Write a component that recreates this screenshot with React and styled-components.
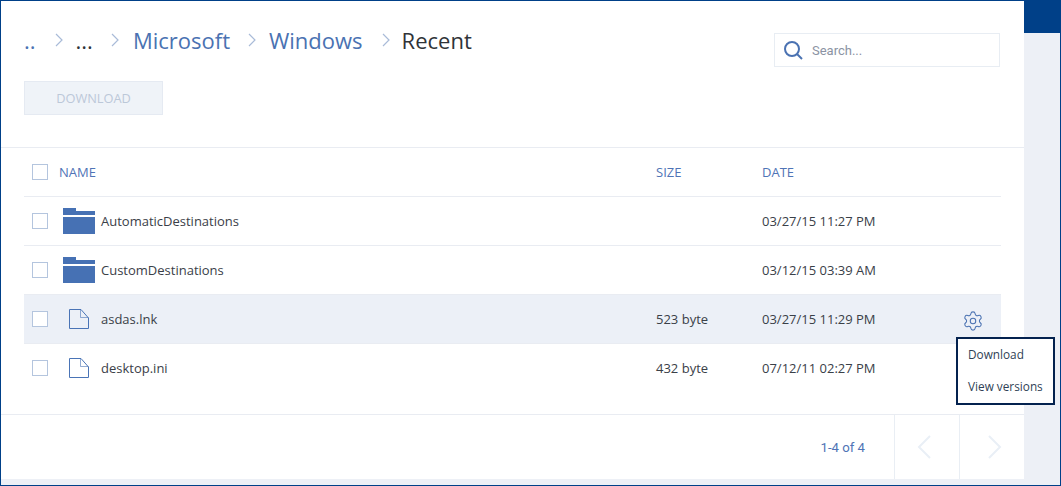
import React from "react";
import styled, { createGlobalStyle } from "styled-components";
import { Settings } from "lucide-react";

const Global = createGlobalStyle`
  html, body { margin: 0; padding: 0; background: #fff; }
  * { box-sizing: border-box; }
`;
const Frame = styled.div`
  width: 1061px; height: 486px; border: 1px solid #004088;
  display: flex; background: #edf0f6; font-family: "Open Sans", sans-serif; position: relative; overflow: hidden;
`;
const Main = styled.main`
  width: 1023px; height: 478px; background: #fff; display: flex; flex-direction: column;
`;
const Side = styled.aside`
  flex: 1; display: flex; flex-direction: column;
`;
const SideTop = styled.div`
  height: 32px; background: #004088;
`;
const Header = styled.header`
  height: 147px; flex: none; padding: 22px 24px 0 23px; border-bottom: 1px solid #e9ecf2; display: flex; justify-content: space-between;
`;
const HeaderLeft = styled.div`
  display: flex; flex-direction: column; gap: 24px; align-items: flex-start;
`;
const Crumbs = styled.nav`
  display: flex; align-items: center; height: 34px; font-size: 22px; line-height: 34px;
`;
const Crumb = styled.span`
  color: ${p => p.$dark ? "#2f3338" : "#4a72b2"};
  margin-left: ${p => p.$ml || 0}px;
`;
const CrumbSep = styled.svg`
  width: 8px; height: 14px; margin-left: ${p => p.$ml}px; fill: none; stroke: #a9bbd8; stroke-width: 1.2; flex: none;
`;
const DownloadBtn = styled.button`
  width: 139px; height: 34px; background: #eff3f8; border: 1px solid #e5eaf2; color: #bcc8d8;
  font: 12.8px "Open Sans", sans-serif; padding: 0; display: flex; align-items: center; justify-content: center;
`;
const SearchBox = styled.div`
  margin-top: 10px; width: 226px; height: 34px; border: 1px solid #e8edf3; display: flex; align-items: center; padding-left: 8px; gap: 9px;
`;
const SearchText = styled.span`
  font: 13px Roboto, sans-serif; color: #8b93a3; padding-top: 1px;
`;
const SearchIcon = styled.svg`
  width: 20px; height: 20px; fill: none; stroke: #4a72b2; stroke-width: 2; flex: none;
`;
const Table = styled.section`
  flex: 1; padding: 0 23px; display: flex; flex-direction: column;
`;
const Row = styled.div`
  display: grid; grid-template-columns: 27px 597px 106px 181px 1fr; align-items: center; height: 49px; padding-left: 8px;
  border-bottom: 1px solid ${p => p.$plain ? "transparent" : "#e9ecf2"};
  background: ${p => p.$active ? "#ecf0f7" : "transparent"};
  font-size: 13px; color: #3a4048;
`;
const HeadRow = styled(Row)`
  font-size: 13px; color: #4f74b6;
`;
const Check = styled.span`
  width: 16px; height: 16px; border: 1px solid #b4c5de; background: #fff; display: block;
`;
const NameCell = styled.div`
  display: flex; align-items: center;
`;
const IconSlot = styled.span`
  width: 42px; flex: none; display: flex; justify-content: center; padding-right: 2px;
`;
const GearCell = styled.div`
  display: flex; justify-content: flex-end; padding: 3px 17px 0 0; color: #4a72b2;
`;
const Footer = styled.footer`
  height: 65px; flex: none; border-top: 1px solid #e9ecf2; display: flex; justify-content: flex-end; align-items: stretch;
`;
const Count = styled.span`
  font: 13.2px Roboto, sans-serif; color: #4f74b6; align-self: center; margin-right: 29px;
`;
const PageBtn = styled.div`
  width: 65px; border-left: 1px solid #e9eef4; display: flex; align-items: center; justify-content: center;
  padding: ${p => p.$next ? "0 0 0 6px" : "0 6px 0 0"};
`;
const PageIcon = styled.svg`
  width: 16px; height: 24px; fill: none; stroke: #e9eff6; stroke-width: 2;
`;
const Menu = styled.div`
  position: absolute; left: 955px; top: 336px; width: 99px; height: 68px; background: #fff; border: 2px solid #04224f;
  display: flex; flex-direction: column; padding: 0 0 0 10px; font-size: 11.8px; color: #2f3f55;
`;
const MenuItem = styled.div`
  height: 32px; line-height: 31px; white-space: nowrap;
`;

const Folder = () => (
  <svg width="32" height="26" viewBox="0 0 32 26" fill="#4671b4">
    <path d="M0 0h13v3h19v4H0z" />
    <path d="M0 9h32v17H0z" />
  </svg>
);
const FileIcon = () => (
  <svg width="20" height="20" viewBox="0 0 20 20" fill="none" stroke="#4a74b6" strokeWidth="1">
    <path d="M.5.5h11.500l7.500 8.500v10.500H.5z" />
    <path d="M11.500.5V8.500h8" strokeWidth="0.6" />
  </svg>
);
const Sep = ({ ml }) => (
  <CrumbSep $ml={ml} viewBox="0 0 8 14"><path d="M1 1l6 6-6 6" /></CrumbSep>
);

const rows = [
  { name: "AutomaticDestinations", date: "03/27/15 11:27 PM", folder: true },
  { name: "CustomDestinations", date: "03/12/15 03:39 AM", folder: true },
  { name: "asdas.lnk", size: "523 byte", date: "03/27/15 11:29 PM", active: true },
  { name: "desktop.ini", size: "432 byte", date: "07/12/11 02:27 PM", plain: true },
];

export default function App() {
  return (
    <>
      <Global />
      <Frame>
        <Main>
          <Header>
            <HeaderLeft>
              <Crumbs>
                <Crumb>..</Crumb>
                <Sep ml={19} />
                <Crumb $dark $ml={13}>...</Crumb>
                <Sep ml={18} />
                <Crumb $ml={14}>Microsoft</Crumb>
                <Sep ml={18} />
                <Crumb $ml={13}>Windows</Crumb>
                <Sep ml={19} />
                <Crumb $dark $ml={12}>Recent</Crumb>
              </Crumbs>
              <DownloadBtn>DOWNLOAD</DownloadBtn>
            </HeaderLeft>
            <SearchBox>
              <SearchIcon viewBox="0 0 20 20"><circle cx="9" cy="9" r="7" /><path d="M14 14l5 5" /></SearchIcon>
              <SearchText>Search...</SearchText>
            </SearchBox>
          </Header>
          <Table>
            <HeadRow>
              <Check />
              <span>NAME</span>
              <span>SIZE</span>
              <span>DATE</span>
            </HeadRow>
            {rows.map(r => (
              <Row key={r.name} $active={r.active} $plain={r.plain}>
                <Check />
                <NameCell>
                  <IconSlot>{r.folder ? <Folder /> : <FileIcon />}</IconSlot>
                  <span>{r.name}</span>
                </NameCell>
                <span>{r.size}</span>
                <span>{r.date}</span>
                <GearCell>{r.active && <Settings size={22} strokeWidth={1.15} />}</GearCell>
              </Row>
            ))}
          </Table>
          <Footer>
            <Count>1-4 of 4</Count>
            <PageBtn><PageIcon viewBox="0 0 16 24"><path d="M14 1L3 12l11 11" /></PageIcon></PageBtn>
            <PageBtn $next><PageIcon viewBox="0 0 16 24"><path d="M2 1l11 11L2 23" /></PageIcon></PageBtn>
          </Footer>
        </Main>
        <Side><SideTop /></Side>
        <Menu>
          <MenuItem>Download</MenuItem>
          <MenuItem>View versions</MenuItem>
        </Menu>
      </Frame>
    </>
  );
}
